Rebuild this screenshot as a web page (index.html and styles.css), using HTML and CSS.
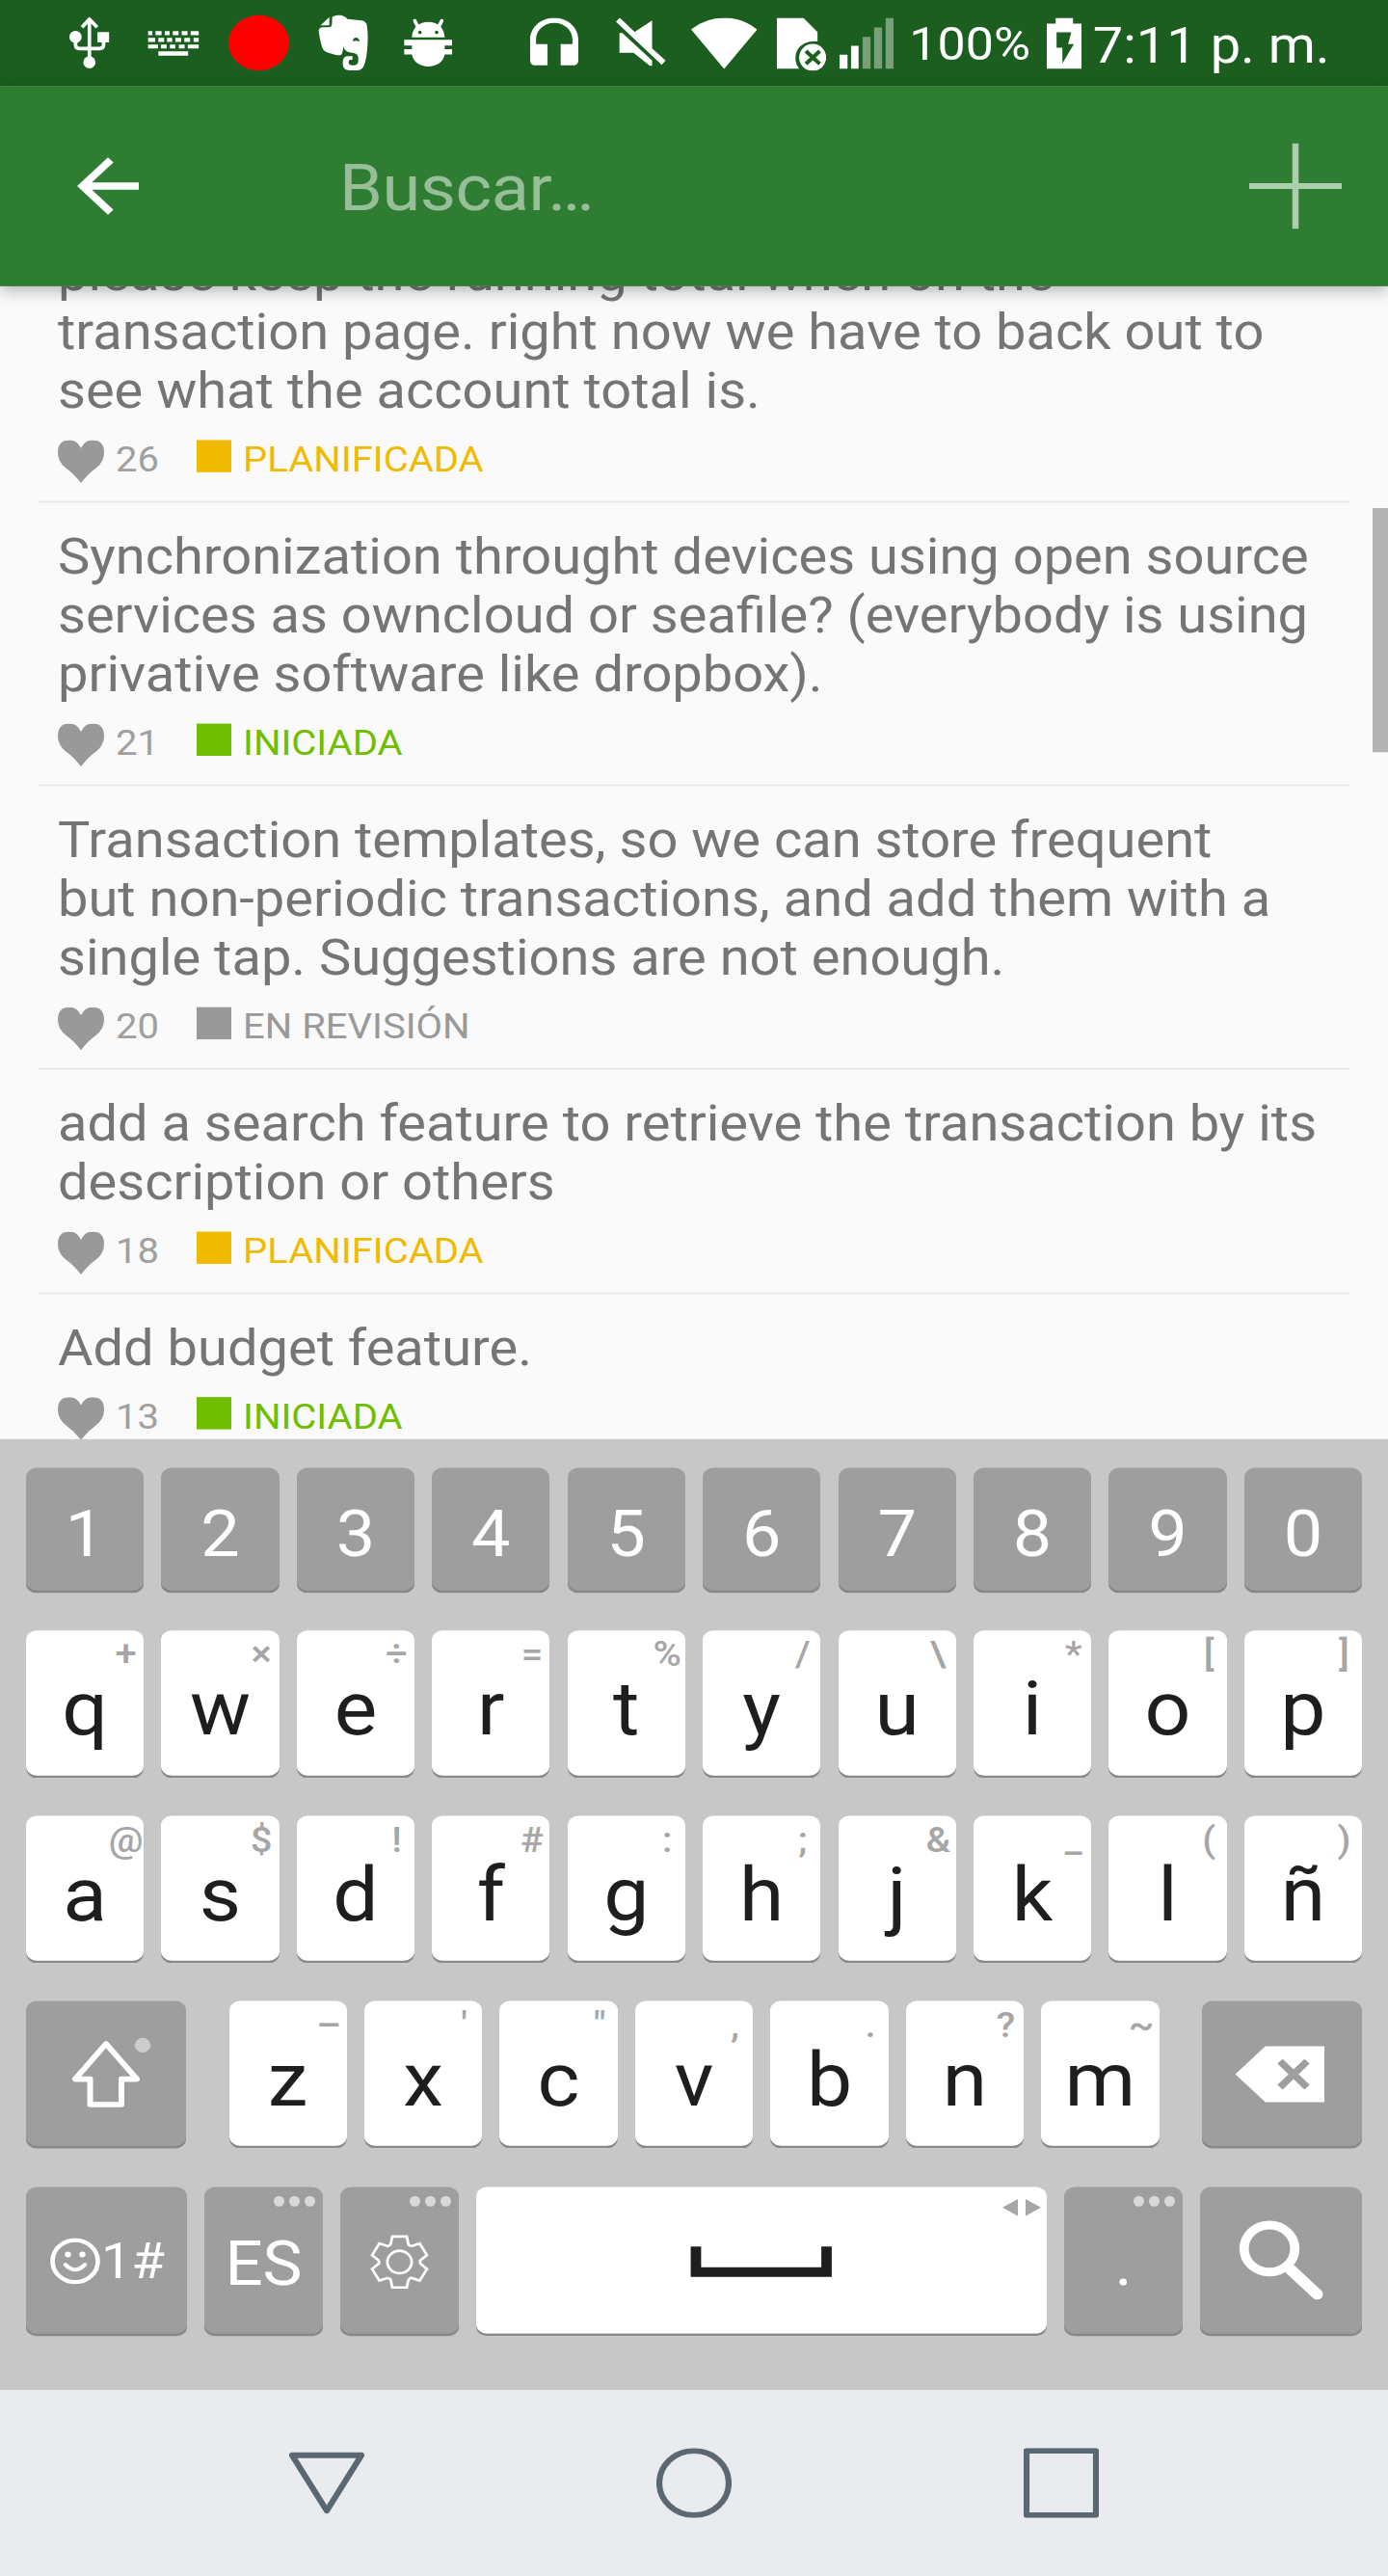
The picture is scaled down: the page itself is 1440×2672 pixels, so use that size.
FILE: index.html
```html
<!DOCTYPE html>
<html lang="es">
<head>
<meta charset="utf-8">
<title>Buscar</title>
<link rel="stylesheet" href="styles.css">
</head>
<body>
<div class="viewport">
<div class="screen">
  <header class="status">
    <svg class="st-usb" viewBox="36 38 124 160" preserveAspectRatio="none"><g fill="#fff"><circle cx="55" cy="100" r="19"/><path d="M123 85h36v32h-36z"/><circle cx="98" cy="179" r="19"/></g><path d="M98 170V48M75 70L98 45l24 25M55 110v14q0 12 12 12h63q12 0 12-12v-14" fill="none" stroke="#fff" stroke-width="11"/></svg>
    <svg class="st-kb" viewBox="279 80 161 79" preserveAspectRatio="none"><path fill="#fff" d="M281 82h13v13h-13zM304 82h19v13h-19zM333 82h15v13h-15zM358 82h18v13h-18zM386 82h18v13h-18zM414 82h25v13h-25zM281 103h22v13h-22zM313 103h18v13h-18zM340 103h16v13h-16zM366 103h18v13h-18zM394 103h18v13h-18zM423 103h16v13h-16zM281 124h31v12h-31zM321 124h18v12h-18zM349 124h17v12h-17zM377 124h18v12h-18zM405 124h34v12h-34zM313 145h93v13h-93z"/></svg>
    <span class="st-rec"></span>
    <svg class="st-evernote" viewBox="30 30 156 176" preserveAspectRatio="none"><path fill="#fff" d="M38 64L65 39V64zM74 38Q84 32 96 33Q113 34 121 45L165 49Q180 51 182 65Q186 90 184 125Q182 165 173 190Q167 205 150 205H128Q107 204 107 186V177Q108 161 124 161H137V172H130Q125 173 125 179V182Q126 189 134 189H142Q154 188 155 177V166Q154 154 142 151Q118 149 111 137L109 129Q106 155 101 157Q92 160 62 150Q46 145 42 131Q34 104 32 82Q32 70 45 70H66Q73 69 73 62z"/><path fill="#1b5e20" d="M138 110Q141 103 149 103Q157 104 159 115Q148 111 138 114z"/></svg>
    <svg class="st-droid" viewBox="296 44 152 150" preserveAspectRatio="none"><path fill="#fff" d="M321 102C322 73 341 54 372 54C403 54 422 73 423 102zM297 109H447V127H423V138H447V155H423C419 179 397 192 372 192C347 192 325 179 321 155H297V138H321V127H297z"/><path d="M330 50l10 20M414 50l-10 20" stroke="#fff" stroke-width="11" stroke-linecap="round"/><circle cx="346" cy="86" r="5.500" fill="#1b5e20"/><circle cx="398" cy="86" r="5.500" fill="#1b5e20"/></svg>
    <svg class="st-head" viewBox="3 1 18 20" preserveAspectRatio="none"><path fill="#fff" d="M12 1c-4.970 0-9 4.030-9 9v9c0 1.100.9 2 2 2h4.500v-9H5.200v-2c0-3.870 3-6.900 6.800-6.900s6.800 3.030 6.800 6.900v2h-4.400v9H19c1.100 0 2-.9 2-2v-9c0-4.970-4.030-9-9-9z"/></svg>
    <svg class="st-mute" viewBox="58 40 155 149" preserveAspectRatio="none"><path fill="#fff" d="M58 52L70 40L171 135L213 173L201 186zM171 48V138L117 83zM69 87H78L171 173V189H164L113 149H69z"/></svg>
    <svg class="st-wifi" viewBox="290 39 206 159" preserveAspectRatio="none"><path fill="#fff" d="M393 198L290 75Q335 39 393 39Q451 39 496 75z"/></svg>
    <svg class="st-sim" viewBox="558 40 154 164" preserveAspectRatio="none"><path fill="#fff" d="M558 40H640L684 84V113Q640 110 621 140Q607 172 627 198H558z"/><circle cx="669" cy="163" r="42" fill="#fff"/><path d="M648 143L691 183M691 143L648 183" stroke="#1b5e20" stroke-width="12"/></svg>
    <svg class="st-signal" viewBox="329 54 123 159" preserveAspectRatio="none"><path fill="#fff" d="M329 169h18v44h-18zM355 141h17v72h-17z"/><path fill="#77a079" d="M381 113h18v100h-18zM407 84h18v129h-18zM433 54h18v159h-18z"/></svg>
    <span class="st-pct">100%</span>
    <svg class="st-batt" viewBox="797 54 78 159" preserveAspectRatio="none"><path fill="#fff" d="M797 72h20V54h39v18h19v141h-78z"/><path fill="#1b5e20" d="M819 99h33l-7 37h13l-26 60v-49h-13z"/></svg>
    <span class="st-time">7:11 p. m.</span>
  </header>

  <div class="appbar">
    <svg class="back" viewBox="0 0 24 24"><path fill="#fff" d="M20 11H7.830l5.590-5.590L12 4l-8 8 8 8 1.410-1.410L7.830 13H20v-2z"/></svg>
    <span class="query">Buscar…</span>
    <svg class="add" viewBox="0 0 96 96"><path d="M48 0V96M0 48H96" stroke="#abcfad" stroke-width="6.500"/></svg>
  </div>

  <main class="content">
    <div class="list">
      <article class="idea"><p>please keep the running total when on the<br>transaction page. right now we have to back out to<br>see what the account total is.</p>
        <div class="meta"><svg class="heart" viewBox="0 0 48 48"><path d="M24 48Q17 38 8 31Q0 24 0 14Q0 0 12 0Q20 0 24 9Q28 0 36 0Q48 0 48 14Q48 24 40 31Q31 38 24 48z"/></svg><span class="count">26</span><span class="state planned">PLANIFICADA</span></div></article>
      <article class="idea"><p>Synchronization throught devices using open source<br>services as owncloud or seafile? (everybody is using<br>privative software like dropbox).</p>
        <div class="meta"><svg class="heart" viewBox="0 0 48 48"><path d="M24 48Q17 38 8 31Q0 24 0 14Q0 0 12 0Q20 0 24 9Q28 0 36 0Q48 0 48 14Q48 24 40 31Q31 38 24 48z"/></svg><span class="count">21</span><span class="state started">INICIADA</span></div></article>
      <article class="idea"><p>Transaction templates, so we can store frequent<br>but non-periodic transactions, and add them with a<br>single tap. Suggestions are not enough.</p>
        <div class="meta"><svg class="heart" viewBox="0 0 48 48"><path d="M24 48Q17 38 8 31Q0 24 0 14Q0 0 12 0Q20 0 24 9Q28 0 36 0Q48 0 48 14Q48 24 40 31Q31 38 24 48z"/></svg><span class="count">20</span><span class="state review">EN REVISIÓN</span></div></article>
      <article class="idea"><p>add a search feature to retrieve the transaction by its<br>description or others</p>
        <div class="meta"><svg class="heart" viewBox="0 0 48 48"><path d="M24 48Q17 38 8 31Q0 24 0 14Q0 0 12 0Q20 0 24 9Q28 0 36 0Q48 0 48 14Q48 24 40 31Q31 38 24 48z"/></svg><span class="count">18</span><span class="state planned">PLANIFICADA</span></div></article>
      <article class="idea"><p>Add budget feature.</p>
        <div class="meta"><svg class="heart" viewBox="0 0 48 48"><path d="M24 48Q17 38 8 31Q0 24 0 14Q0 0 12 0Q20 0 24 9Q28 0 36 0Q48 0 48 14Q48 24 40 31Q31 38 24 48z"/></svg><span class="count">13</span><span class="state started">INICIADA</span></div></article>
    </div>
    <div class="scrollbar"></div>
  </main>

  <section class="keyboard">
    <div class="row digits">
      <div class="key dark">1</div><div class="key dark">2</div><div class="key dark">3</div><div class="key dark">4</div><div class="key dark">5</div><div class="key dark">6</div><div class="key dark">7</div><div class="key dark">8</div><div class="key dark">9</div><div class="key dark">0</div>
    </div>
    <div class="row">
      <div class="key">q<span class="hint">+</span></div><div class="key">w<span class="hint">×</span></div><div class="key">e<span class="hint">÷</span></div><div class="key">r<span class="hint">=</span></div><div class="key">t<span class="hint">%</span></div><div class="key">y<span class="hint">/</span></div><div class="key">u<span class="hint">\</span></div><div class="key">i<span class="hint">*</span></div><div class="key">o<span class="hint">[</span></div><div class="key">p<span class="hint">]</span></div>
    </div>
    <div class="row">
      <div class="key">a<span class="hint">@</span></div><div class="key">s<span class="hint">$</span></div><div class="key">d<span class="hint">!</span></div><div class="key">f<span class="hint">#</span></div><div class="key">g<span class="hint">:</span></div><div class="key">h<span class="hint">;</span></div><div class="key">j<span class="hint">&amp;</span></div><div class="key">k<span class="hint">_</span></div><div class="key">l<span class="hint">(</span></div><div class="key">ñ<span class="hint">)</span></div>
    </div>
    <div class="row third">
      <div class="key dark glyph"><svg viewBox="0 0 166 165"><path d="M83 48L51 87.500H66.500V116H99V87.500H115z" fill="none" stroke="#fff" stroke-width="6" stroke-linejoin="round"/><circle cx="121" cy="49.500" r="8.200" fill="#cdcdcd"/></svg></div>
      <div class="letters">
        <div class="key">z<span class="hint">–</span></div><div class="key">x<span class="hint">'</span></div><div class="key">c<span class="hint">"</span></div><div class="key">v<span class="hint">,</span></div><div class="key">b<span class="hint">.</span></div><div class="key">n<span class="hint">?</span></div><div class="key">m<span class="hint">~</span></div>
      </div>
      <div class="key dark glyph"><svg viewBox="0 0 166 165"><path fill="#fff" d="M34.600 82L65.800 50.800H127V113.200H65.800z"/><path d="M81 67.500L109 96.500M109 67.500L81 96.500" stroke="#9e9e9e" stroke-width="7.500"/></svg></div>
    </div>
    <div class="row bottom">
      <div class="key dark glyph symbols"><svg viewBox="0 0 52 52"><circle cx="26" cy="26" r="23.500" fill="none" stroke="#fff" stroke-width="4.600"/><circle cx="18.500" cy="18.500" r="3.200" fill="#fff"/><circle cx="33.500" cy="18.500" r="3.200" fill="#fff"/><path d="M16 30Q26 41 36 30" fill="none" stroke="#fff" stroke-width="4.500" stroke-linecap="round"/></svg><span>1#</span></div>
      <div class="key dark lang">ES<span class="dots"><i></i><i></i><i></i></span></div>
      <div class="key dark glyph"><svg viewBox="0 0 123 167"><defs><path id="tooth" d="M-9.300-19.300L-7.500-28.500H7.500L9.300-19.300L12.100-17.700"/></defs><g transform="translate(61.500 84)" fill="none" stroke="#fff" stroke-width="2.800"><use href="#tooth"/><use href="#tooth" transform="rotate(60)"/><use href="#tooth" transform="rotate(120)"/><use href="#tooth" transform="rotate(180)"/><use href="#tooth" transform="rotate(240)"/><use href="#tooth" transform="rotate(300)"/><circle r="12.600"/></g></svg><span class="dots"><i></i><i></i><i></i></span></div>
      <div class="key glyph space"><svg viewBox="0 0 592 167"><path d="M228 66.700V95.200H363.500V66.700" fill="none" stroke="#1e1e1e" stroke-width="10.800"/><path fill="#a6a6a6" d="M546 23L562 13.500V32.500zM586 23L570 13.500V32.500z"/></svg></div>
      <div class="key dark lang">.<span class="dots"><i></i><i></i><i></i></span></div>
      <div class="key dark glyph"><svg viewBox="0 0 168 167"><circle cx="72" cy="69" r="26.300" fill="none" stroke="#fff" stroke-width="9.700"/><path d="M91 89L94 93" stroke="#fff" stroke-width="10"/><path d="M93.500 92L121.500 120" stroke="#fff" stroke-width="12" stroke-linecap="round"/></svg></div>
    </div>
  </section>

  <nav class="nav">
    <svg viewBox="0 0 78 78"><path d="M3 8H75L39 70z"/></svg>
    <svg viewBox="0 0 78 78"><circle cx="39" cy="39" r="36"/></svg>
    <svg viewBox="0 0 78 78"><path d="M3 3H75V75H3z"/></svg>
  </nav>
</div>
</div>
</body>
</html>
```
FILE: styles.css
```css
* { box-sizing: border-box; }
body { margin: 0; font-family: Roboto, sans-serif; }
svg { display: block; flex: none; }

/* The phone layout is 1440x2880, fitted into a slightly shorter window. */
.viewport { width: 1440px; height: 2672px; overflow: hidden; }
.screen {
  width: 1440px;
  height: 2880px;
  display: flex;
  flex-direction: column;
  transform: scaleY(0.927778);
  transform-origin: 0 0;
  background: #fafafa;
}

/* Status bar */
.status { height: 96px; flex: none; display: flex; align-items: flex-start; background: #1b5e20; color: #fff; }
.st-usb { width: 41.500px; height: 57.500px; margin: 19px 0 0 72px; }
.st-kb { width: 53.500px; height: 28.500px; margin: 34px 0 0 39.500px; }
.st-rec { width: 63px; height: 62px; margin: 17px 0 0 30px; border-radius: 50%; background: #f00; }
.st-evernote { width: 52px; height: 63px; margin: 16px 0 0 30.500px; }
.st-droid { width: 50.700px; height: 54px; margin: 21px 0 0 36.700px; }
.st-head { width: 50px; height: 53.500px; margin: 19.700px 0 0 80.600px; }
.st-mute { width: 51.500px; height: 53.500px; margin: 20px 0 0 39.300px; }
.st-wifi { width: 68.500px; height: 57px; margin: 19.500px 0 0 26px; }
.st-sim { width: 51.500px; height: 59px; margin: 19.500px 0 0 20.500px; }
.st-signal { width: 56.500px; height: 57px; margin: 19.500px 0 0 13.500px; }
.st-pct { width: 143px; padding: 24px 0 0 16px; font-size: 52px; line-height: 52px; white-space: nowrap; }
.st-batt { width: 36px; height: 57px; margin: 19.500px 0 0 15.500px; }
.st-time { padding: 22.800px 0 0 12px; font-size: 56px; line-height: 56px; white-space: nowrap; }

/* Search bar */
.appbar {
  position: relative;
  z-index: 1;
  height: 224px;
  flex: none;
  display: flex;
  align-items: center;
  padding: 0 48px 0 64px;
  background: #2e7d32;
  box-shadow: 0 6px 16px rgba(0, 0, 0, .3);
}
.back { width: 96px; height: 96px; }
.query { flex: 1; padding: 6px 0 0 192px; font-size: 72px; line-height: 72px; letter-spacing: -.4px; color: #97be98; }
.add { width: 96px; height: 96px; }

/* Ideas */
.content { position: relative; height: 1289px; flex: none; overflow: hidden; }
.list { margin: -75.500px 40px 0; }
.idea { padding: 27px 20px 20px; border-bottom: 2px solid #e8e8e8; }
.idea p { margin: 0; font-size: 56px; line-height: 66px; color: #757575; white-space: nowrap; }
.meta { display: flex; align-items: flex-start; height: 48px; margin-top: 22px; font-size: 40px; line-height: 40px; }
.heart { width: 48px; height: 48px; fill: #999; }
.count { width: 96px; padding: 2px 0 0 12px; color: #a0a0a0; }
.state { display: flex; gap: 12px; padding-top: 2px; }
.state::before { content: ""; width: 36px; height: 36px; margin-top: -2px; background: currentColor; }
.planned { color: #f0ba00; }
.started { color: #6fbe00; }
.review { color: #999; }
.scrollbar { position: absolute; right: 0; top: 248px; width: 16px; height: 273px; background: #b2b2b2; }

/* Keyboard */
.keyboard {
  height: 1063px;
  flex: none;
  display: flex;
  flex-direction: column;
  gap: 42.300px;
  padding: 32px 27px 0;
  background: #c7c7c7;
}
.row { display: grid; grid-template-columns: repeat(10, 1fr); gap: 18.300px; height: 165px; }
.key {
  position: relative;
  padding-top: 46.500px;
  border-radius: 11px;
  background: #fff;
  box-shadow: inset 0 -3px 0 #888a89;
  color: #1e1e1e;
  font-size: 84px;
  line-height: 84px;
  text-align: center;
}
.dark { background: #9e9e9e; color: #fff; }
.digits { height: 139.500px; }
.digits .key { padding-top: 39px; font-size: 72px; line-height: 72px; }
.hint {
  position: absolute;
  top: 7.500px;
  right: -11.500px;
  width: 60px;
  color: #a6a6a6;
  font-size: 40px;
  font-weight: 500;
  line-height: 40px;
}
.third { grid-template-columns: 166px 965px 166px; justify-content: space-between; gap: 0; }
.letters { display: grid; grid-template-columns: repeat(7, 1fr); gap: 18.300px; }
.bottom { height: 167px; grid-template-columns: 167px 123px 123px 592px 123px 168px; justify-content: space-between; gap: 0; }
.key.glyph { padding: 0; }
.key.glyph > svg { width: 100%; height: 100%; }
.key.symbols { display: flex; padding: 55.500px 0 0 25px; font-size: 56px; line-height: 56px; }
.key.symbols > svg { width: 52px; height: 52px; margin-top: 1.500px; }
.symbols span { margin-left: 1px; }
.key.lang { padding-top: 51.500px; font-size: 69px; line-height: 70px; }
.dots { position: absolute; top: 10px; right: 8.500px; display: flex; gap: 5px; }
.dots i { width: 11px; height: 12px; border-radius: 50%; background: #d9d9d9; }

/* Navigation bar */
.nav { flex: 1; display: flex; justify-content: center; gap: 303px; padding-top: 65px; background: #e9ebee; }
.nav svg { width: 78px; height: 78px; fill: none; stroke: #5a6872; stroke-width: 6.200; stroke-linejoin: round; }
```
